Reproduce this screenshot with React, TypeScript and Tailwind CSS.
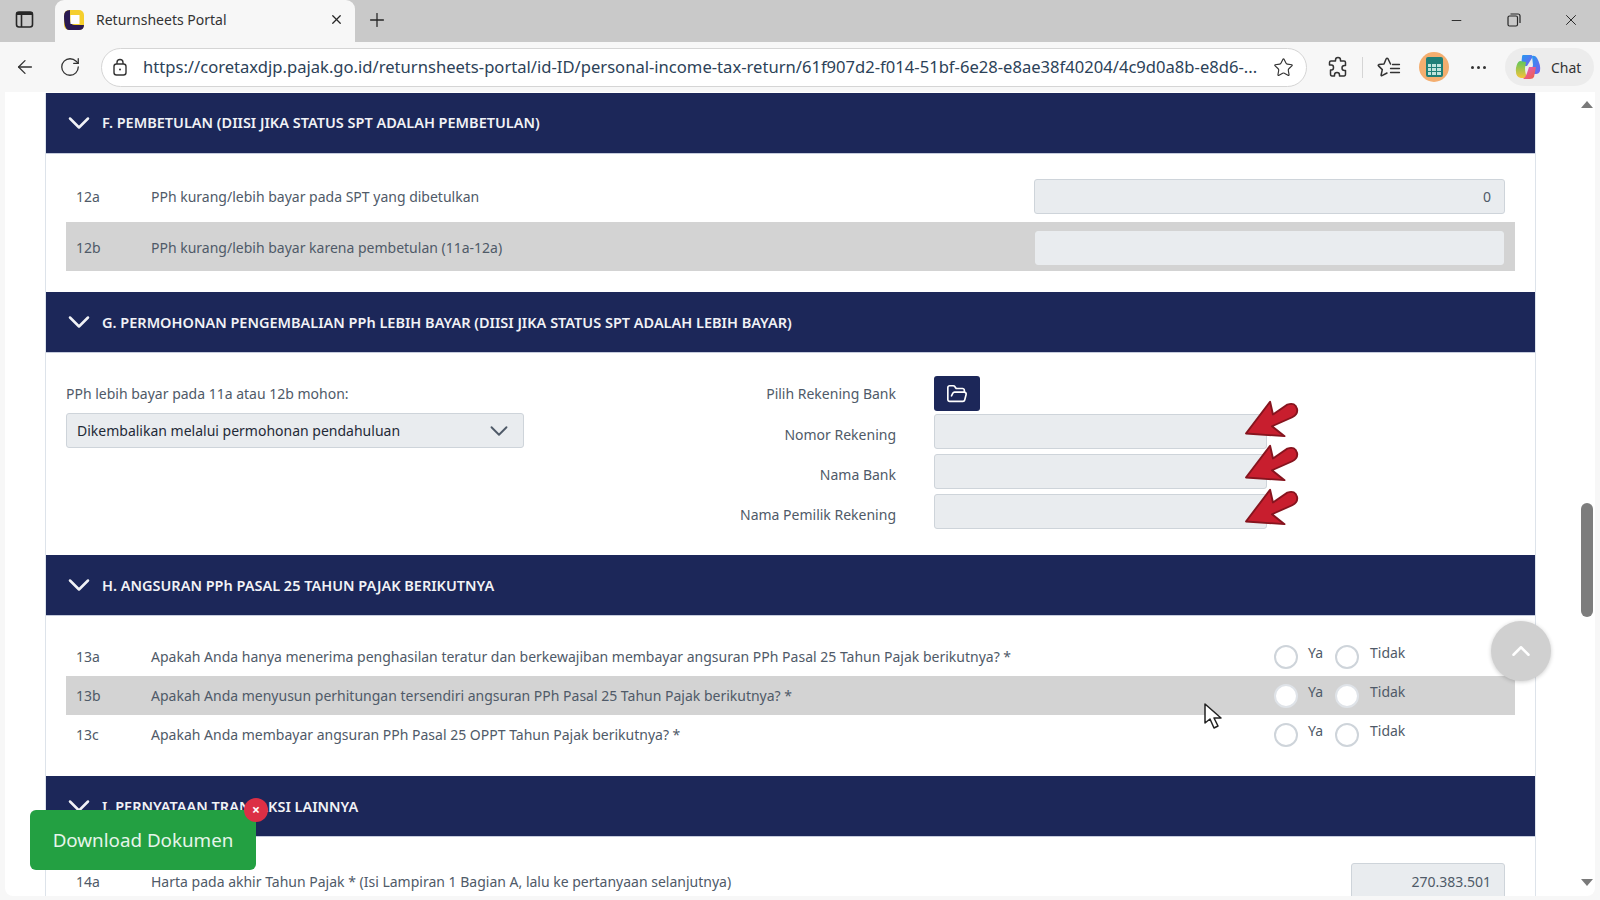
import { ArrowLeft, ChevronDown, ChevronUp, FolderOpen, Minus, Plus, RotateCw, Star, X } from "lucide-react";
import type { ReactNode } from "react";

function SectionHeader({ title, first }: { title: string; first?: boolean }) {
  return (
    <div className="flex h-[61px] items-center gap-[5px] border-b border-[#c5cbdc] bg-[#1c2759] pl-[15px] text-[14.5px] font-semibold text-[#f1f2f6]">
      <ChevronDown className="h-[36px] w-[36px]" strokeWidth={1.7} />
      <span className={first ? "" : "pt-[2px]"}>{title}</span>
    </div>
  );
}

function Row({
  no,
  text,
  shaded,
  children,
  className = "",
}: {
  no: string;
  text: string;
  shaded?: boolean;
  children?: ReactNode;
  className?: string;
}) {
  return (
    <div className={`flex items-center pl-[10px] text-[14px] text-[#4f5a68] ${shaded ? "bg-[#d3d3d3]" : ""} ${className}`}>
      <span className="w-[75px] shrink-0">{no}</span>
      <span className="flex-1">{text}</span>
      {children}
    </div>
  );
}

function ReadonlyInput({ className = "", children }: { className?: string; children?: ReactNode }) {
  return (
    <div className={`flex items-center justify-end rounded-[3px] border border-[#ced4da] bg-[#e9ecef] pr-[13px] text-[14px] text-[#4f5a68] ${className}`}>
      {children}
    </div>
  );
}

function Radio({ shaded }: { shaded?: boolean }) {
  return <span className={`mt-[2px] block h-[24px] w-[24px] shrink-0 rounded-full border-2 ${shaded ? "border-[#dfe3e8] bg-white" : "border-[#ced4da] bg-white"}`} />;
}

function YesNo({ shaded }: { shaded?: boolean }) {
  return (
    <div className="-mt-[2px] flex w-[241px] shrink-0 text-[14px]">
      <Radio shaded={shaded} />
      <span className="-mt-[1px] ml-[10px] w-[27px]">Ya</span>
      <Radio shaded={shaded} />
      <span className="-mt-[1px] ml-[11px]">Tidak</span>
    </div>
  );
}

function RedArrow({ className }: { className: string }) {
  return (
    <svg width="54" height="38" viewBox="0 0 56 42" preserveAspectRatio="none" className={`absolute left-[1245px] ${className}`}>
      <path
        d="M1 37 L26 2 L29 16 L44 5 Q52 2 54 10 Q55 16 49 19 L28 29 L41 40 Z"
        fill="#c81e2e"
        stroke="#86141e"
        strokeWidth="2"
        strokeLinejoin="round"
      />
    </svg>
  );
}

function BankField({ label, top }: { label: string; top?: boolean }) {
  return (
    <div className="flex items-center">
      <span className={`w-[192px] text-right text-[14px] text-[#4f5a68] ${top ? "" : "pt-[5px]"}`}>{label}</span>
      {top ? (
        <button className="ml-[38px] flex h-[35px] w-[46px] items-center justify-center rounded-[3px] bg-[#1c2759] text-white">
          <FolderOpen className="h-[22px] w-[22px]" strokeWidth={1.8} />
        </button>
      ) : (
        <ReadonlyInput className="ml-[38px] h-[35px] w-[333px]" />
      )}
    </div>
  );
}

function CopilotIcon() {
  return (
    <svg width="28" height="28" viewBox="0 0 28 28">
      <defs>
        <linearGradient id="copA" x1="0" y1="0" x2="1" y2="1">
          <stop offset="0" stopColor="#1f9cf0" />
          <stop offset="1" stopColor="#7a5cf0" />
        </linearGradient>
        <linearGradient id="copB" x1="0" y1="0" x2="1" y2="1">
          <stop offset="0" stopColor="#e05ad0" />
          <stop offset="1" stopColor="#f0603a" />
        </linearGradient>
        <linearGradient id="copC" x1="0" y1="0" x2="0" y2="1">
          <stop offset="0" stopColor="#5fc65a" />
          <stop offset="1" stopColor="#f5c33b" />
        </linearGradient>
      </defs>
      <path d="M9 2 H17 Q19 2 18 5 L13 13 H7 L8 4 Q8 2 9 2 Z" fill="url(#copA)" />
      <path d="M6 8 Q3 9 2 15 Q1 24 7 25 H14 Q11 22 11 15 L12 9 Z" fill="url(#copC)" />
      <path d="M18 3 Q21 2 23 5 Q27 12 26 18 Q25 21 22 21 H17 L19 12 Z" fill="url(#copA)" />
      <path d="M15 14 H22 L20 24 Q19 26 16 26 H9 Q12 24 13 20 Z" fill="url(#copB)" />
    </svg>
  );
}

function BrowserChrome() {
  return (
    <>
      <div className="flex h-[42px] items-end bg-[#c9c9c9] text-[#262626]">
        <div className="flex h-[42px] w-[55px] items-center justify-center pb-[3px] pr-[6px]">
          <svg width="19" height="19" viewBox="0 0 19 19" fill="none" stroke="#262626" strokeWidth="1.6">
            <rect x="1.5" y="2" width="16" height="15" rx="2.5" />
            <path d="M6.5 2 V17" />
            <path d="M1.5 3.5 H17.5" strokeWidth="3" />
          </svg>
        </div>
        <div className="flex h-[42px] w-[300px] items-center rounded-t-[9px] bg-[#f7f7f7] pb-[3px] pl-[9px] pr-[11px]">
          <svg width="20" height="20" viewBox="0 0 20 20">
            <rect width="20" height="20" rx="5" fill="#f5cf2d" />
            <path d="M0 6 Q0 20 5 20 H15 Q20 20 20 15 H11 Q6 15 6 9 V0 Q0 0 0 6 Z" fill="#2a1a52" />
            <rect x="6.5" y="5" width="9" height="9" fill="#fff" />
          </svg>
          <span className="ml-[12px] flex-1 text-[14px] text-[#333]">Returnsheets Portal</span>
          <X className="h-[15px] w-[15px]" strokeWidth={2} />
        </div>
        <div className="flex h-[42px] w-[44px] items-center justify-center pb-[3px]">
          <Plus className="h-[22px] w-[22px]" strokeWidth={1.4} />
        </div>
        <div className="ml-auto flex h-[42px] items-center pb-[2px]">
          <div className="flex w-[58px] justify-center">
            <Minus className="h-[15px] w-[15px]" strokeWidth={1.5} />
          </div>
          <div className="flex w-[57px] justify-center">
            <svg width="14" height="14" viewBox="0 0 14 14" fill="none" stroke="#262626" strokeWidth="1.2">
              <rect x="1" y="3" width="9.5" height="10" rx="1.5" />
              <path d="M3.5 1 H11 Q13 1 13 3 V10" />
            </svg>
          </div>
          <div className="flex w-[58px] justify-center">
            <X className="h-[18px] w-[18px]" strokeWidth={1.3} />
          </div>
        </div>
      </div>
      <div className="flex h-[50px] items-center bg-[#f7f7f7] text-[#333]">
        <div className="flex w-[50px] justify-center">
          <ArrowLeft className="h-[22px] w-[22px]" strokeWidth={1.4} />
        </div>
        <RotateCw className="ml-[9px] h-[22px] w-[22px]" strokeWidth={1.4} />
        <div className="ml-[20px] flex h-[39px] w-[1206px] items-center rounded-full border border-[#d5d5d5] bg-white pl-[10px] pr-[12px]">
          <svg width="16" height="18" viewBox="0 0 16 18" fill="none" stroke="#333" strokeWidth="1.4">
            <rect x="2" y="6" width="12" height="11" rx="2.5" />
            <path d="M5 6 V4.5 Q5 1.5 8 1.5 Q11 1.5 11 4.5 V6" />
            <circle cx="8" cy="11.5" r="1" fill="#333" stroke="none" />
          </svg>
          <span className="ml-[15px] flex-1 whitespace-nowrap text-[16.6px] text-[#2c4258]">
            https://coretaxdjp.pajak.go.id/returnsheets-portal/id-ID/personal-income-tax-return/61f907d2-f014-51bf-6e28-e8ae38f40204/4c9d0a8b-e8d6-...
          </span>
          <Star className="h-[21px] w-[21px]" strokeWidth={1.3} />
        </div>
        <div className="ml-[18px] flex w-[26px] justify-center">
          <svg width="22" height="22" viewBox="0 0 22 22" fill="none" stroke="#333" strokeWidth="1.5" strokeLinejoin="round">
            <path d="M8.5 4 Q8.5 1.5 11 1.5 Q13.5 1.5 13.5 4 V5 H17 Q18.5 5 18.5 6.5 V9.5 H17.5 Q15 9.5 15 12 Q15 14.5 17.5 14.5 H18.5 V18 Q18.5 20 17 20 H12.5 V19 Q12.5 16.5 10 16.5 Q7.5 16.5 7.5 19 V20 H5 Q3.5 20 3.5 18 V14 H4.5 Q6.5 14 6.5 11.5 Q6.5 9 4.5 9 H2.5 V6.5 Q2.5 5 4 5 H8.5 Z" />
          </svg>
        </div>
        <div className="ml-[11px] h-[21px] w-px bg-[#d5d5d5]" />
        <div className="ml-[14px]">
          <svg width="24" height="22" viewBox="0 0 24 22" fill="none" stroke="#333" strokeWidth="1.5" strokeLinejoin="round" strokeLinecap="round">
            <path d="M13.5 8 L11 2.8 Q10 1.5 9.2 2.8 L7 8 L1.8 8.6 Q0.8 9 1.5 9.9 L5.3 13.6 L4.1 19 Q4 20 5 19.6 L10 17" />
            <path d="M15.5 8.5 H22.5 M13.5 12.5 H22.5 M13.5 16.5 H22.5" strokeWidth="1.3" />
          </svg>
        </div>
        <div className="ml-[18px] flex h-[30px] w-[30px] items-center justify-center rounded-full bg-[#f4ae6f]">
          <div className="grid h-[20px] w-[17px] grid-cols-3 content-end gap-[1px] rounded-[2px] bg-[#1f7f78] p-[2px] pt-[6px]">
            {[...Array(9)].map((_, i) => (
              <span key={i} className="h-[3px] bg-[#bfe3dc]" />
            ))}
          </div>
        </div>
        <div className="ml-[22px] flex gap-[3px]">
          <span className="h-[3px] w-[3px] rounded-full bg-[#333]" />
          <span className="h-[3px] w-[3px] rounded-full bg-[#333]" />
          <span className="h-[3px] w-[3px] rounded-full bg-[#333]" />
        </div>
        <div className="ml-[19px] flex h-[38px] w-[89px] items-center gap-[9px] rounded-full bg-[#ececec] pl-[9px] text-[14px] text-[#333]">
          <CopilotIcon />
          <span>Chat</span>
        </div>
      </div>
    </>
  );
}

export default function App() {
  return (
    <div className="relative h-[900px] w-[1600px] overflow-hidden bg-[#f7f7f7] font-['Noto_Sans','Open_Sans',sans-serif]">
      <BrowserChrome />

      <main className="relative mx-[5px] flex h-[804px] overflow-hidden rounded-b-lg bg-white pt-px">
        <div className="ml-[40px] h-[860px] w-[1491px] shrink-0 border-x border-[#dde3ea]">
          <SectionHeader first title="F. PEMBETULAN (DIISI JIKA STATUS SPT ADALAH PEMBETULAN)" />
          <div className="px-[20px] pb-[21px] pt-[25px]">
            <Row no="12a" text="PPh kurang/lebih bayar pada SPT yang dibetulkan" className="pb-[8px] pr-[10px]">
              <ReadonlyInput className="h-[35px] w-[471px]">0</ReadonlyInput>
            </Row>
            <Row no="12b" text="PPh kurang/lebih bayar karena pembetulan (11a-12a)" shaded className="h-[49px] pr-[11px] pt-[2px]">
              <ReadonlyInput className="h-[34px] w-[469px] border-[#e9ecef]" />
            </Row>
          </div>

          <SectionHeader title="G. PERMOHONAN PENGEMBALIAN PPh LEBIH BAYAR (DIISI JIKA STATUS SPT ADALAH LEBIH BAYAR)" />
          <div className="flex h-[202px] px-[20px] pt-[23px]">
            <div className="w-[638px]">
              <div className="w-[458px]">
                <p className="mt-[8px] text-[14px] leading-[20px] text-[#4f5a68]">PPh lebih bayar pada 11a atau 12b mohon:</p>
                <div className="mt-[9px] flex h-[35px] items-center justify-between rounded-[3px] border border-[#ced4da] bg-[#e9ecef] pl-[10px] pr-[9px] text-[14px] text-[#1f2a37]">
                  <span>Dikembalikan melalui permohonan pendahuluan</span>
                  <ChevronDown className="h-[30px] w-[30px] text-[#4f5a68]" strokeWidth={1.5} />
                </div>
              </div>
            </div>
            <div className="flex flex-col">
              <BankField label="Pilih Rekening Bank" top />
              <div className="mt-[3px] flex flex-col gap-[5px]">
                <BankField label="Nomor Rekening" />
                <BankField label="Nama Bank" />
                <BankField label="Nama Pemilik Rekening" />
              </div>
            </div>
          </div>

          <SectionHeader title="H. ANGSURAN PPh PASAL 25 TAHUN PAJAK BERIKUTNYA" />
          <div className="px-[20px] pb-[22px] pt-[21px]">
            <Row no="13a" text="Apakah Anda hanya menerima penghasilan teratur dan berkewajiban membayar angsuran PPh Pasal 25 Tahun Pajak berikutnya? *" className="h-[39px]">
              <YesNo />
            </Row>
            <Row no="13b" text="Apakah Anda menyusun perhitungan tersendiri angsuran PPh Pasal 25 Tahun Pajak berikutnya? *" shaded className="h-[39px]">
              <YesNo shaded />
            </Row>
            <Row no="13c" text="Apakah Anda membayar angsuran PPh Pasal 25 OPPT Tahun Pajak berikutnya? *" className="h-[39px]">
              <YesNo />
            </Row>
          </div>

          <SectionHeader title="I. PERNYATAAN TRANSAKSI LAINNYA" />
          <div className="px-[20px] pt-[26px]">
            <Row no="14a" text="Harta pada akhir Tahun Pajak * (Isi Lampiran 1 Bagian A, lalu ke pertanyaan selanjutnya)" className="pr-[10px]">
              <ReadonlyInput className="h-[36px] w-[154px]">270.383.501</ReadonlyInput>
            </Row>
          </div>
        </div>

        <div className="relative ml-auto w-[16px] shrink-0">
          <span className="absolute left-[2px] top-[8px] h-0 w-0 border-x-[6px] border-b-[7px] border-x-transparent border-b-[#7a7a7a]" />
          <span className="absolute left-[2px] top-[410px] h-[114px] w-[12px] rounded-full bg-[#7d7d7d]" />
          <span className="absolute bottom-[10px] left-[2px] h-0 w-0 border-x-[6px] border-t-[7px] border-x-transparent border-t-[#7a7a7a]" />
        </div>
      </main>

      {/* overlays */}
      <RedArrow className="top-[400px]" />
      <RedArrow className="top-[444px]" />
      <RedArrow className="top-[488px]" />

      <button className="absolute left-[1491px] top-[621px] flex h-[60px] w-[60px] items-center justify-center rounded-full bg-[#d0d0d0] text-white shadow-[0_1px_4px_rgba(0,0,0,0.2)]">
        <ChevronUp className="h-[30px] w-[30px]" strokeWidth={2} />
      </button>

      <svg width="20" height="28" viewBox="0 0 20 28" className="absolute left-[1203px] top-[702px]">
        <path d="M2 2 L2 21 L7 17 L11 26 L15 24 L11 16 L18 16 Z" fill="#fff" stroke="#222" strokeWidth="1.5" strokeLinejoin="round" />
      </svg>

      <div className="absolute left-[30px] top-[810px] flex h-[60px] w-[226px] items-center justify-center rounded-[6px] bg-[#23a042] text-[18.8px] text-[#e6f5ea]">
        Download Dokumen
      </div>
      <span className="absolute left-[244px] top-[798px] flex h-[24px] w-[24px] items-center justify-center rounded-full bg-[#dc2f45] text-[14px] font-bold leading-none text-white">
        ×
      </span>
    </div>
  );
}
